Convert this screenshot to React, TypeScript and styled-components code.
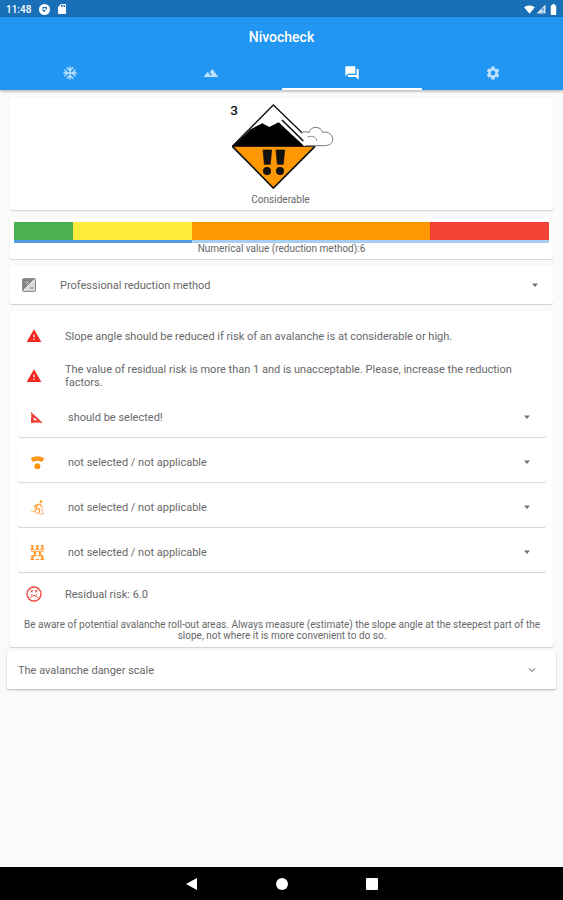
import React from "react";
import styled, { createGlobalStyle } from "styled-components";
import {
  MdAcUnit,
  MdBatteryFull,
  MdExpandMore,
  MdForum,
  MdSdCard,
  MdSettings,
  MdSignalWifi4Bar,
  MdTerrain,
  MdWarning,
} from "react-icons/md";

const GlobalStyle = createGlobalStyle`
  * { box-sizing: border-box; }
  body {
    margin: 0;
    background: #fafafa;
    color: #686868;
    font-family: Roboto, "Liberation Sans", sans-serif;
    font-size: 11px;
    line-height: 13px;
  }
  button, select { font: inherit; color: inherit; }
  svg { display: block; flex-shrink: 0; }
`;

const Page = styled.div`
  min-height: 100vh;
  display: flex;
  flex-direction: column;
`;

const StatusBar = styled.div`
  height: 17px;
  padding: 1px 3px 0 6px;
  display: flex;
  align-items: center;
  justify-content: space-between;
  background: #1a70b8;
  color: #fff;
`;

const StatusGroup = styled.div<{ $gap: number }>`
  display: flex;
  align-items: center;
  gap: ${(p) => p.$gap}px;
`;

const Clock = styled.span`
  font-weight: 500;
  font-size: 10px;
  margin-right: 2px;
`;

const AppBar = styled.header`
  background: #2196f3;
  color: #fff;
  box-shadow: 0 1px 3px rgba(0, 0, 0, 0.35);
`;

const Title = styled.h1`
  margin: 0;
  padding-top: 1px;
  font-size: 14px;
  font-weight: 500;
  line-height: 38px;
  text-align: center;
`;

const Tabs = styled.nav`
  display: grid;
  grid-template-columns: repeat(4, 1fr);
`;

const Tab = styled.button<{ $active?: boolean }>`
  height: 34px;
  padding: 2px 0 0;
  display: flex;
  align-items: center;
  justify-content: center;
  background: none;
  border: 0;
  border-bottom: 2px solid ${(p) => (p.$active ? "#fff" : "transparent")};
  color: ${(p) => (p.$active ? "#fff" : "rgba(255, 255, 255, 0.72)")};
`;

const Content = styled.main`
  flex: 1;
  padding: 8px 10px;
  display: flex;
  flex-direction: column;
  gap: 7px;
`;

const Card = styled.section`
  background: #fff;
  border-radius: 2px;
  box-shadow: 0 1px 1px rgba(0, 0, 0, 0.16), 0 0 1px rgba(0, 0, 0, 0.1);
`;

const RatingCard = styled(Card)`
  padding: 4px 2px 4px 0;
  display: flex;
  flex-direction: column;
  align-items: center;
  gap: 3px;
`;

const Caption = styled.p`
  margin: 0;
  font-size: 10px;
  line-height: 13px;
  text-align: center;
`;

const ScaleCard = styled(Card)`
  padding: 5px 4px 4px;
`;

const ScaleCaption = styled(Caption)`
  line-height: 12px;
`;

const Scale = styled.div`
  height: 18px;
  display: flex;
`;

const Segment = styled.div<{ $weight: number; $color: string }>`
  flex: ${(p) => p.$weight};
  background: ${(p) => p.$color};
`;

const Track = styled.div`
  height: 3px;
  background: #a6cdf2;
`;

const TrackFill = styled.div`
  height: 100%;
  background: #4f9be3;
`;

const MethodCard = styled(Card)`
  padding: 0 15px 0 12px;
`;

const DetailCard = styled(Card)`
  padding: 5px 7px 6px 8px;
`;

const Picker = styled.label<{ $gap: number }>`
  height: 38px;
  display: flex;
  align-items: center;
  gap: ${(p) => p.$gap}px;
`;

const PickerCards = styled.div`
  padding: 2px 0;
  display: flex;
  flex-direction: column;
  gap: 6px;
`;

const PickerCard = styled(Card)`
  padding: 0 16px 0 12px;
  height: 39px;
`;

const SelectBox = styled.select`
  flex: 1;
  min-width: 0;
  padding: 0;
  border: 0;
  appearance: none;
  background: none;
`;

const Notice = styled.div`
  min-height: 40px;
  padding: 0 14px 0 8px;
  display: flex;
  align-items: center;
  gap: 23px;
`;

const NoticeText = styled.p`
  margin: 0;
`;

const Advice = styled(Caption)`
  padding-top: 5px;
  line-height: 11px;
`;

const Expander = styled.button`
  height: 38px;
  margin: -3px -3px 0;
  padding: 0 17px 0 11px;
  display: flex;
  align-items: center;
  justify-content: space-between;
  border: 0;
  border-radius: 2px;
  background: #fff;
  box-shadow: 0 1px 2px rgba(0, 0, 0, 0.28);
`;

const SystemNav = styled.nav`
  height: 33px;
  display: flex;
  align-items: center;
  justify-content: center;
  gap: 76px;
  background: #000;
`;

const SystemButton = styled.button`
  padding: 0;
  border: 0;
  background: none;
  color: #fff;
`;

const AppNoticeIcon = () => (
  <svg width="11" height="11" viewBox="0 0 22 22" aria-hidden="true">
    <circle cx="11" cy="11" r="11" fill="#fff" />
    <path d="M7 6h9v5h-4v5a5 5 0 0 1-5-5z" fill="#1a70b8" />
    <path d="M9 8h4v4H9z" fill="#fff" />
  </svg>
);

const SignalIcon = () => (
  <svg width="10" height="10" viewBox="0 0 20 20" aria-hidden="true">
    <path d="M1 19 19 1v18z" fill="#fff" opacity=".8" />
    <path d="M14 8v6M14 16v2" stroke="#1a70b8" strokeWidth="2" />
  </svg>
);

const DangerSign = () => (
  <svg width="110" height="88" viewBox="78 30 330 264" role="img" aria-label="Danger level 3">
    <text x="91" y="70" fontSize="41" fontWeight="500" fill="#111">3</text>
    <path d="M97 163H345L220 288Z" fill="#ff9800" />
    <path d="M99 162 152 112 187 94 208 105 236 91 310 160V163H99Z" fill="#000" />
    <path d="M97 163 220 39 310 126" fill="none" stroke="#111" strokeWidth="4" />
    <path d="M97 163 220 288 345 163" fill="none" stroke="#111" strokeWidth="5" />
    <path d="M97 163H345" stroke="#111" strokeWidth="3" />
    <path d="M246 84 310 147" stroke="#111" strokeWidth="5" />
    <path
      d="M303 124C310 118 320 118 327 122C330 101 363 101 368 121C385 117 399 129 398 143C397 157 384 162 368 161H318"
      fill="#fff"
      stroke="#777"
      strokeWidth="3"
    />
    <path d="M322 135C336 130 350 134 350 147" fill="none" stroke="#888" strokeWidth="3" />
    <path d="M189 174h26l-4 43h-18zM228 174h26l-4 43h-18z" fill="#111" stroke="#111" strokeWidth="2" strokeLinejoin="round" />
    <circle cx="201" cy="237" r="12" fill="#111" />
    <circle cx="240" cy="237" r="12" fill="#111" />
  </svg>
);

const MethodIcon = () => (
  <svg width="14" height="14" viewBox="0 0 28 28" aria-hidden="true">
    <rect x="1" y="1" width="26" height="26" rx="3" fill="#d8d8d8" stroke="#8a8a8a" strokeWidth="2" />
    <path d="M2 2h24L2 26z" fill="#858585" />
    <path d="M6 9h9M10.500 5v9" stroke="#b0b0b0" strokeWidth="2" />
    <path d="M3 25 25 3" stroke="#fff" strokeWidth="2" />
    <path d="M16 20h7" stroke="#858585" strokeWidth="2" />
  </svg>
);

const CaretIcon = () => (
  <svg width="6" height="4" viewBox="0 0 12 8" aria-hidden="true">
    <path d="M0 1h12L6 8z" fill="#707070" />
  </svg>
);

const SlopeIcon = () => (
  <svg width="15" height="15" viewBox="0 0 45 45" aria-hidden="true">
    <path d="M3 6 38 38H3Z M11 22V31H22Z" fill="#f0382e" fillRule="evenodd" />
    <path d="M3 14h4M3 21h4M16 38v-3M26 38v-3" stroke="#fff" strokeWidth="2" />
  </svg>
);

const AspectIcon = () => (
  <svg width="15" height="15" viewBox="0 0 45 45" aria-hidden="true">
    <path d="M2 10Q22 -2 43 10L36 21Q22 14 9 21Z" fill="#ff9110" />
    <path d="M13 8v4M22 6v5M31 8v4" stroke="#ffc078" strokeWidth="2" />
    <circle cx="22" cy="34" r="9" fill="#ff9110" />
  </svg>
);

const SkierIcon = () => (
  <svg width="15" height="15" viewBox="0 0 45 45" aria-hidden="true" fill="none" stroke="#ff9d35" strokeWidth="4">
    <circle cx="33" cy="5" r="4" fill="#ff9d35" stroke="none" />
    <path d="M29 12 18 16 12 22M20 15 19 25 29 27 27 39M19 25 15 35M29 13 35 19" />
    <path d="M1 31 31 43 43 40M37 18v21" strokeWidth="2" />
  </svg>
);

const Person = ({ x, y }: { x: number; y: number }) => (
  <g transform={`translate(${x} ${y})`}>
    <circle cx="0" cy="0" r="4" />
    <path d="M-6 10Q-6 4 0 4T6 10Z" />
  </g>
);

const GroupIcon = () => (
  <svg width="15" height="15" viewBox="0 0 45 45" aria-hidden="true" fill="#ff9420">
    <Person x={7} y={4} />
    <Person x={22} y={4} />
    <Person x={37} y={4} />
    <path d="M3 17h38v3H3z" />
    <Person x={15} y={24} />
    <Person x={30} y={24} />
    <Person x={7} y={35} />
    <Person x={37} y={35} />
    <path d="M17 42h10v3H17z" />
  </svg>
);

const SadIcon = () => (
  <svg width="16" height="16" viewBox="0 0 48 48" aria-hidden="true" fill="none" stroke="#f0443c" strokeWidth="4">
    <circle cx="24" cy="24" r="21" />
    <path
      d="M13 12 20 18M20 12 14 19M35 12 28 18M28 12 34 19M13 35Q24 22 35 35M17 24v4M31 24v4"
      strokeWidth="3"
    />
  </svg>
);

const PICKERS = [
  { label: "Slope angle", value: "should be selected!", icon: <SlopeIcon /> },
  { label: "Aspect", value: "not selected / not applicable", icon: <AspectIcon /> },
  { label: "Route", value: "not selected / not applicable", icon: <SkierIcon /> },
  { label: "Group size", value: "not selected / not applicable", icon: <GroupIcon /> },
];

const WARNINGS = [
  "Slope angle should be reduced if risk of an avalanche is at considerable or high.",
  "The value of residual risk is more than 1 and is unacceptable. Please, increase the reduction factors.",
];

export default function App() {
  const progress = 6 / 18;
  return (
    <Page>
      <GlobalStyle />
      <StatusBar>
        <StatusGroup $gap={6}>
          <Clock>11:48</Clock>
          <AppNoticeIcon />
          <MdSdCard size={12} />
        </StatusGroup>
        <StatusGroup $gap={1}>
          <MdSignalWifi4Bar size={11} />
          <SignalIcon />
          <MdBatteryFull size={13} />
        </StatusGroup>
      </StatusBar>
      <AppBar>
        <Title>Nivocheck</Title>
        <Tabs>
          <Tab aria-label="Snow"><MdAcUnit size={16} /></Tab>
          <Tab aria-label="Terrain"><MdTerrain size={16} /></Tab>
          <Tab aria-label="Assessment" aria-current="page" $active><MdForum size={16} /></Tab>
          <Tab aria-label="Settings"><MdSettings size={16} /></Tab>
        </Tabs>
      </AppBar>
      <Content>
        <RatingCard>
          <DangerSign />
          <Caption>Considerable</Caption>
        </RatingCard>
        <ScaleCard>
          <Scale>
            <Segment $weight={1} $color="#4caf50" />
            <Segment $weight={2} $color="#ffeb3b" />
            <Segment $weight={4} $color="#ff9800" />
            <Segment $weight={2} $color="#f44336" />
          </Scale>
          <Track role="progressbar" aria-label="Numerical value" aria-valuenow={6} aria-valuemax={18}>
            <TrackFill style={{ width: `${progress * 100}%` }} />
          </Track>
          <ScaleCaption>Numerical value (reduction method):6</ScaleCaption>
        </ScaleCard>
        <MethodCard>
          <Picker $gap={24}>
            <MethodIcon />
            <SelectBox aria-label="Method">
              <option>Professional reduction method</option>
            </SelectBox>
            <CaretIcon />
          </Picker>
        </MethodCard>
        <DetailCard>
          {WARNINGS.map((text) => (
            <Notice key={text}>
              <MdWarning size={16} color="#f02820" />
              <NoticeText>{text}</NoticeText>
            </Notice>
          ))}
          <PickerCards>
            {PICKERS.map((p) => (
              <PickerCard key={p.label}>
                <Picker $gap={23}>
                  {p.icon}
                  <SelectBox aria-label={p.label}>
                    <option>{p.value}</option>
                  </SelectBox>
                  <CaretIcon />
                </Picker>
              </PickerCard>
            ))}
          </PickerCards>
          <Notice>
            <SadIcon />
            <NoticeText>Residual risk: 6.0</NoticeText>
          </Notice>
          <Advice>
            Be aware of potential avalanche roll-out areas. Always measure (estimate) the slope angle at the steepest
            part of the slope, not where it is more convenient to do so.
          </Advice>
        </DetailCard>
        <Expander aria-expanded="false">
          <span>The avalanche danger scale</span>
          <MdExpandMore size={14} color="#8a8a8a" />
        </Expander>
      </Content>
      <SystemNav>
        <SystemButton aria-label="Back">
          <svg width="14" height="14" viewBox="0 0 14 14"><path d="M1 7 12 1v12z" fill="currentColor" /></svg>
        </SystemButton>
        <SystemButton aria-label="Home">
          <svg width="14" height="14" viewBox="0 0 14 14"><circle cx="7" cy="7" r="6" fill="currentColor" /></svg>
        </SystemButton>
        <SystemButton aria-label="Recent apps">
          <svg width="14" height="14" viewBox="0 0 14 14"><rect x="1" y="1" width="12" height="12" rx="1" fill="currentColor" /></svg>
        </SystemButton>
      </SystemNav>
    </Page>
  );
}
